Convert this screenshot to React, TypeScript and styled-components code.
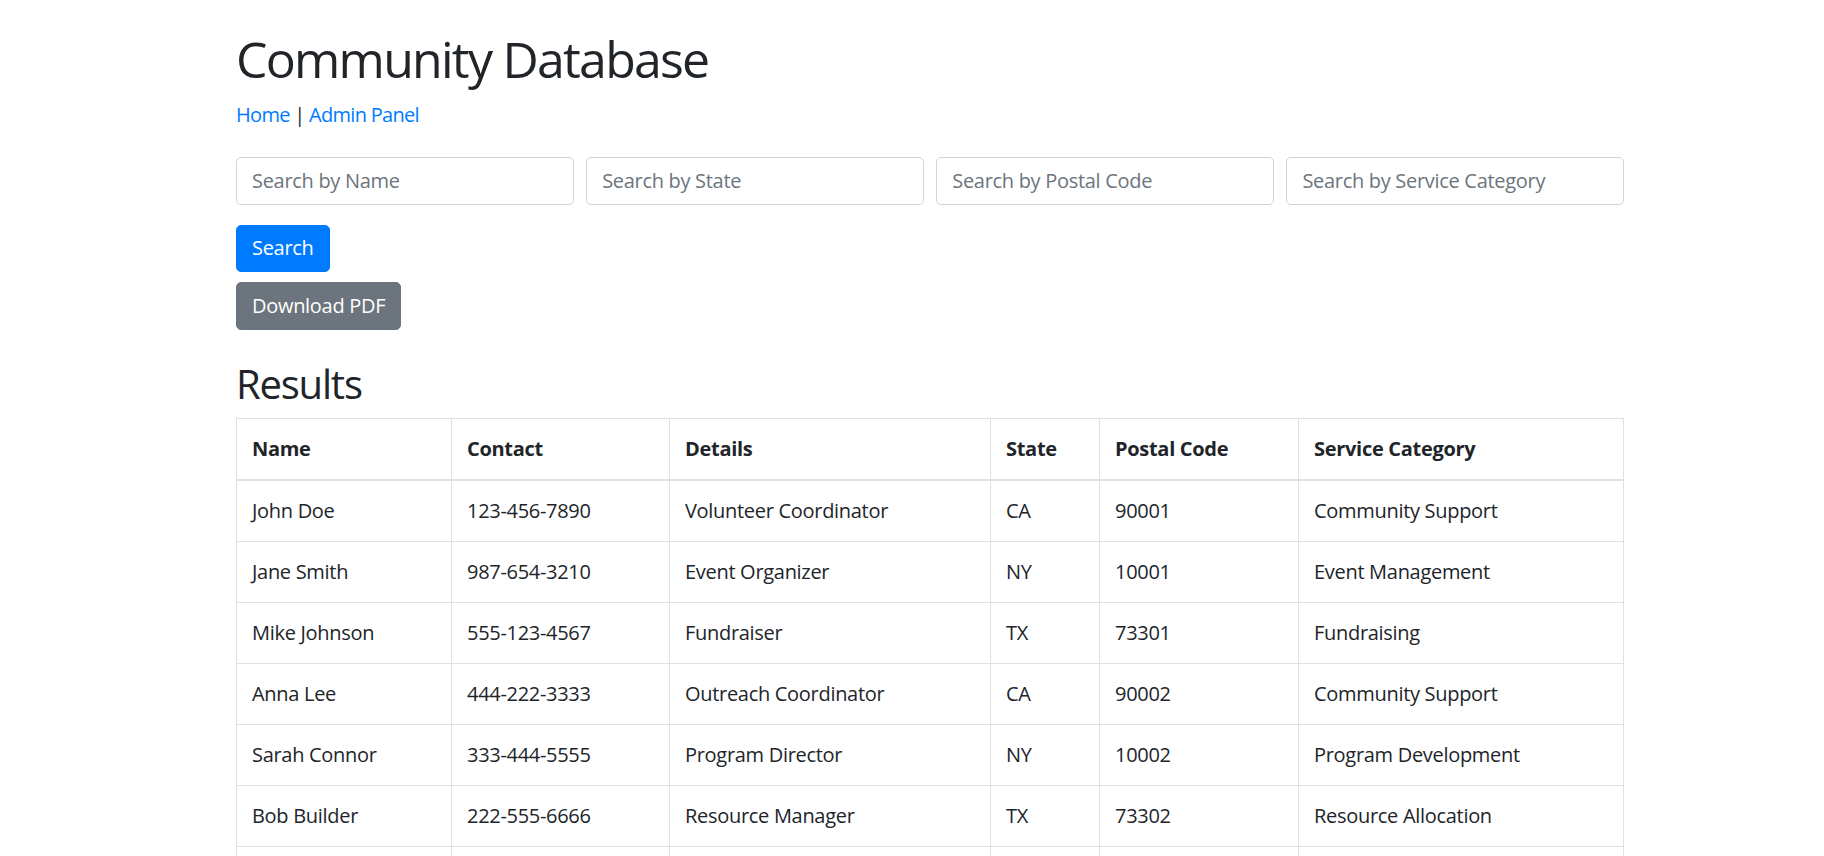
import React from "react";
import styled, { createGlobalStyle } from "styled-components";

const GlobalStyle = createGlobalStyle`
  body {
    margin: 0;
    background: #fff;
    color: #212529;
    font-family: "Segoe UI", "Open Sans", "Noto Sans", sans-serif;
    font-size: 20px;
    line-height: 1.5;
  }
`

const Page = styled.div`
  padding: 29px 0 0 236px;
`

const Container = styled.div`
  width: 1388px;
`

const Title = styled.h1`
  margin: 0 0 10.5px;
  font-size: 50px;
  font-weight: 400;
  line-height: 1.2;
  letter-spacing: -0.035em;
`

const NavLine = styled.p`
  margin: 0 0 27.5px;
  letter-spacing: -0.035em;
`

const NavLink = styled.a`
  color: #007bff;
  text-decoration: none;
`

const FormRow = styled.div`
  display: grid;
  grid-template-columns: repeat(4, 1fr);
  gap: 12.5px;
  margin-bottom: 20px;
`

const Input = styled.input`
  box-sizing: border-box;
  height: 47.5px;
  width: 100%;
  padding: 7.5px 15px;
  font-family: inherit;
  font-size: 20px;
  letter-spacing: -0.015em;
  color: #495057;
  border: 1px solid #ced4da;
  border-radius: 5px;
  outline: none;

  &::placeholder {
    color: #6c757d;
  }
`

const ButtonStack = styled.div`
  display: flex;
  flex-direction: column;
  align-items: flex-start;
  gap: 10px;
`

const Button = styled.button<{ $variant: "primary" | "secondary" }>`
  box-sizing: border-box;
  height: 47.5px;
  padding: 7.5px 15px;
  font-family: inherit;
  font-size: 20px;
  line-height: 1.5;
  letter-spacing: -0.015em;
  color: #fff;
  background: ${p => p.$variant === "primary" ? "#007bff" : "#6c757d"};
  border: 1px solid ${p => p.$variant === "primary" ? "#007bff" : "#6c757d"};
  border-radius: 5px;
  cursor: pointer;
`

const SectionTitle = styled.h2`
  margin: 30px 0 10px;
  font-size: 40px;
  font-weight: 400;
  line-height: 1.2;
  letter-spacing: -0.03em;
`

const Table = styled.table`
  width: 100%;
  table-layout: fixed;
  border-collapse: collapse;
  border: 1px solid #dee2e6;
  letter-spacing: -0.015em;
`

const HeadCell = styled.th<{ $width?: number }>`
  box-sizing: border-box;
  width: ${p => p.$width ? `${p.$width}px` : "auto"};
  padding: 15px;
  text-align: left;
  vertical-align: bottom;
  font-weight: 700;
  white-space: nowrap;
  border: 1px solid #dee2e6;
  border-bottom: 2px solid #dee2e6;
`

const Cell = styled.td`
  padding: 15px;
  vertical-align: top;
  border: 1px solid #dee2e6;
  white-space: nowrap;
`

const columns = [
  { label: "Name", width: 215 },
  { label: "Contact", width: 218 },
  { label: "Details", width: 321 },
  { label: "State", width: 109 },
  { label: "Postal Code", width: 199 },
  { label: "Service Category" },
]

const people = [
  ["John Doe", "123-456-7890", "Volunteer Coordinator", "CA", "90001", "Community Support"],
  ["Jane Smith", "987-654-3210", "Event Organizer", "NY", "10001", "Event Management"],
  ["Mike Johnson", "555-123-4567", "Fundraiser", "TX", "73301", "Fundraising"],
  ["Anna Lee", "444-222-3333", "Outreach Coordinator", "CA", "90002", "Community Support"],
  ["Sarah Connor", "333-444-5555", "Program Director", "NY", "10002", "Program Development"],
  ["Bob Builder", "222-555-6666", "Resource Manager", "TX", "73302", "Resource Allocation"],
  ["Emily Clark", "111-666-7777", "Volunteer", "CA", "90003", "Community Support"],
]

const App: React.FC = () => {
  return (
    <Page>
      <GlobalStyle />
      <Container>
        <Title>Community Database</Title>
        <NavLine>
          <NavLink href="#">Home</NavLink> | <NavLink href="#">Admin Panel</NavLink>
        </NavLine>
        <FormRow>
          <Input placeholder="Search by Name" />
          <Input placeholder="Search by State" />
          <Input placeholder="Search by Postal Code" />
          <Input placeholder="Search by Service Category" />
        </FormRow>
        <ButtonStack>
          <Button $variant="primary">Search</Button>
          <Button $variant="secondary">Download PDF</Button>
        </ButtonStack>
        <SectionTitle>Results</SectionTitle>
        <Table>
          <thead>
            <tr>
              {columns.map(col => (
                <HeadCell key={col.label} $width={col.width}>{col.label}</HeadCell>
              ))}
            </tr>
          </thead>
          <tbody>
            {people.map(row => (
              <tr key={row[0]}>
                {row.map((value, i) => <Cell key={i}>{value}</Cell>)}
              </tr>
            ))}
          </tbody>
        </Table>
      </Container>
    </Page>
  );
}

export default App;
